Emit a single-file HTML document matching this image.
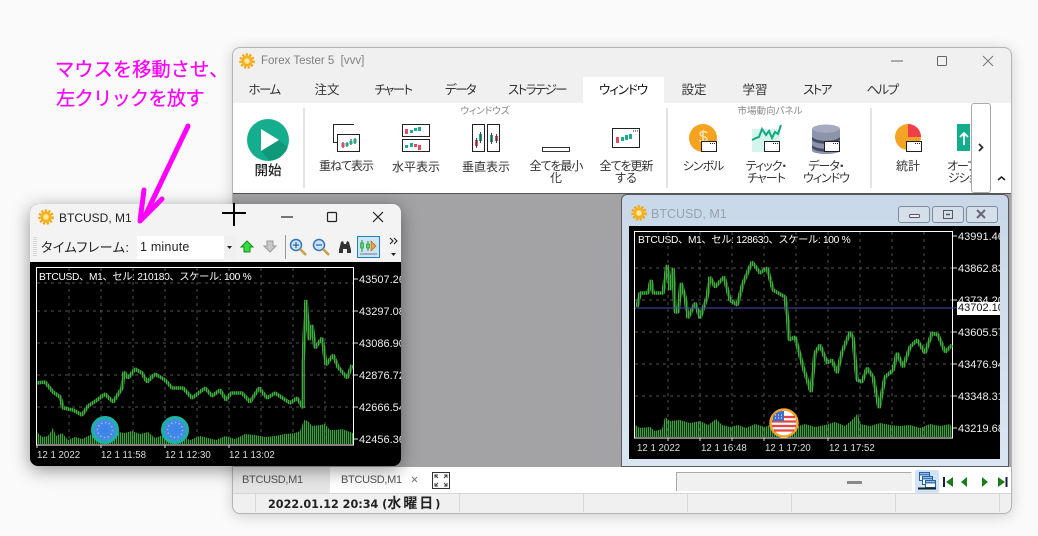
<!DOCTYPE html>
<html><head><meta charset="utf-8"><style>
html,body{margin:0;padding:0;width:1038px;height:536px;overflow:hidden;background:#fafafa}
body{position:relative;font-family:"Liberation Sans","Noto Sans CJK JP",sans-serif;color:#222}
div,span{position:absolute;box-sizing:border-box}
.t{white-space:nowrap;font-size:12px;line-height:14px;font-feature-settings:"palt";transform:translateX(-50%);color:#333}
.k{letter-spacing:-1px}
.l{white-space:nowrap;font-size:12px;line-height:14px;font-feature-settings:"palt"}
.tab{font-size:12.5px;color:#333;top:83px}
.kt{letter-spacing:-1.6px}
.ax{white-space:nowrap;font-size:11px;line-height:12px;color:#eee}
.tm{white-space:nowrap;font-size:9.7px;line-height:12px;color:#ddd}
.cap{white-space:nowrap;font-size:10.2px;line-height:14px;letter-spacing:-.3px;color:#fff}
.mg{white-space:nowrap;font-size:19.3px;line-height:24px;color:#ff00ff;-webkit-text-stroke:.25px #ff00ff}
svg{position:absolute;left:0;top:0;overflow:visible}
</style></head><body>

<!-- main window -->
<div style="left:232px;top:47px;width:780px;height:467px;background:#f0f0f0;border:1px solid #b4b4b4;border-radius:8px;box-shadow:0 2px 14px rgba(0,0,0,.18);overflow:hidden"></div>
<div style="left:233px;top:103px;width:778px;height:90px;background:#fff"></div>
<div style="left:583px;top:77px;width:81px;height:26px;background:#fff"></div>
<div style="left:233px;top:193px;width:778px;height:274px;background:#a3a2a5;border-top:1px solid #555"></div>
<div style="left:233px;top:467px;width:778px;height:26px;background:#fff"></div>
<div style="left:233px;top:467px;width:97px;height:26px;background:#e6e6e6"></div>
<div style="left:233px;top:493px;width:778px;height:20px;background:#f0f0f0;border-top:1px solid #d5d5d5;border-radius:0 0 8px 8px"></div>

<div class="l" style="left:261px;top:54px;color:#808080;font-size:11.5px;white-space:pre;font-feature-settings:normal">Forex Tester 5  [vvv]</div>
<div class="t tab kt" style="left:264px">ホーム</div>
<div class="t tab" style="left:327px">注文</div>
<div class="t tab kt" style="left:393px">チャート</div>
<div class="t tab kt" style="left:460px">データ</div>
<div class="t tab kt" style="left:537px">ストラテジー</div>
<div class="t tab k" style="left:623px;color:#111">ウィンドウ</div>
<div class="t tab" style="left:694px">設定</div>
<div class="t tab" style="left:755px">学習</div>
<div class="t tab kt" style="left:817px">ストア</div>
<div class="t tab kt" style="left:882px">ヘルプ</div>

<div class="t" style="left:485px;top:105px;font-size:9.5px;color:#888">ウィンドウズ</div>
<div class="t" style="left:770px;top:105px;font-size:9.5px;color:#888">市場動向パネル</div>

<div class="t" style="left:268px;top:164px;font-size:13.5px;font-weight:500;color:#222">開始</div>
<div class="t k" style="left:346px;top:159px">重ねて表示</div>
<div class="t" style="left:416px;top:160px">水平表示</div>
<div class="t" style="left:486px;top:160px">垂直表示</div>
<div class="t k" style="left:556px;top:159px">全てを最小</div>
<div class="t" style="left:556px;top:171px">化</div>
<div class="t k" style="left:626px;top:159px">全てを更新</div>
<div class="t" style="left:626px;top:171px">する</div>
<div class="t k" style="left:703px;top:159px">シンボル</div>
<div class="t k" style="left:766px;top:159px">ティック・</div>
<div class="t k" style="left:766px;top:171px">チャート</div>
<div class="t k" style="left:826px;top:159px">データ・</div>
<div class="t k" style="left:826px;top:171px">ウィンドウ</div>
<div class="t" style="left:908px;top:159px">統計</div>
<div class="t k" style="left:967px;top:159px">オープン</div>
<div class="t k" style="left:967px;top:171px">ジション</div>

<!-- ribbon icons -->
<svg width="1038" height="536" fill="none">
<defs>
<g id="gear"><circle r="5.6" fill="#f5b21c"/><circle r="6.6" stroke="#f0a818" stroke-width="2.4" stroke-dasharray="2.2 1.5"/><circle r="2.8" fill="#fbe7a0"/></g>
<g id="win"><rect x=".5" y=".5" width="15" height="10" fill="#fff" stroke="#222"/><path d="M9 2.5h1m1 0h1m1 0h1" stroke="#222"/></g>
<clipPath id="pc"><circle cx="268" cy="140" r="21"/></clipPath>
</defs>
<use href="#gear" x="247" y="61"/>
<path d="M891 61h12" stroke="#666"/>
<rect x="937.500" y="56.500" width="9" height="9" rx="1" stroke="#666"/>
<path d="M983 56l10 10M993 56l-10 10" stroke="#777"/>
<path d="M304 108v80M667 108v80M871 108v80" stroke="#d9d9d9" stroke-width="1.500"/>
<circle cx="268" cy="140" r="21" fill="#14ae8e"/>
<path d="M279 140l14 12-20 12-12-13z" fill="#0e9377" opacity=".8" clip-path="url(#pc)"/>
<path d="M261 129l18 11-18 11z" fill="#fff"/>

<!-- cascade -->
<path d="M354 124.500h-20.500v18h4" stroke="#222"/><path d="M349 124.500h4" stroke="#222"/>
<rect x="337.500" y="134.500" width="22" height="17" fill="#fff" stroke="#222"/>
<path d="M343 142v6M347 142v5M351 139v6M355 138v6" stroke="#333"/>
<rect x="341.500" y="143" width="3" height="4" fill="#e04b5f"/><rect x="345.500" y="143" width="3" height="3" fill="#1eab8c"/><rect x="349.500" y="141" width="3" height="3" fill="#1eab8c"/><rect x="353.500" y="139" width="3" height="4" fill="#1eab8c"/>
<!-- horizontal -->
<rect x="402.500" y="124.500" width="27" height="12" fill="#fff" stroke="#222"/>
<rect x="402.500" y="139.500" width="27" height="12" fill="#fff" stroke="#222"/>
<rect x="405" y="129" width="3" height="5" fill="#e04b5f"/><rect x="410" y="130" width="3" height="3" fill="#1eab8c"/><rect x="414" y="128" width="3" height="3" fill="#1eab8c"/><rect x="418" y="127" width="3" height="4" fill="#1eab8c"/>
<rect x="405" y="145" width="3" height="3" fill="#1eab8c"/><rect x="410" y="143" width="3" height="4" fill="#1eab8c"/><rect x="414" y="144" width="3" height="3" fill="#e04b5f"/><rect x="418" y="145" width="3" height="5" fill="#e04b5f"/>
<!-- vertical -->
<rect x="472.500" y="124.500" width="12" height="27" fill="#fff" stroke="#222"/>
<rect x="487.500" y="124.500" width="12" height="27" fill="#fff" stroke="#222"/>
<rect x="475" y="140" width="3" height="6" fill="#e04b5f"/><rect x="479" y="134" width="3" height="7" fill="#1eab8c"/><rect x="490" y="135" width="3" height="7" fill="#1eab8c"/><rect x="495" y="136" width="3" height="5" fill="#e04b5f"/>
<path d="M476.500 138v10M480.500 132v11M491.500 133v11M496.500 134v9" stroke="#444"/>
<!-- minimize -->
<rect x="542.500" y="147.500" width="27" height="4" fill="#fff" stroke="#333"/>
<!-- refresh -->
<rect x="612.500" y="128.500" width="27" height="19" fill="#fff" stroke="#222"/>
<path d="M633 131h1m1 0h1m1 0h1" stroke="#222"/>
<rect x="616" y="137" width="3" height="6" fill="#e04b5f"/><rect x="621" y="137" width="3" height="4" fill="#1eab8c"/><rect x="625" y="135" width="3" height="5" fill="#1eab8c"/><rect x="629" y="134" width="3" height="5" fill="#1eab8c"/>
<!-- symbol -->
<circle cx="703" cy="138" r="14" fill="#f5a21e"/>
<path d="M707 133c-1-2-7-2-7 1s7 2 7 5-6 3-8 1M703 130v14" stroke="#fbe3b4" stroke-width="1.500"/>
<g transform="translate(701 141)"><use href="#win"/></g>
<!-- tick chart -->
<rect x="752" y="129" width="28" height="23" fill="#d2f5ec"/>
<path d="M752 140l4-2 3-1 3-8 4 6 3-4 3 7 3-6 3 2 3-9" stroke="#16a87e" stroke-width="2"/>
<g transform="translate(764 141)"><use href="#win"/></g>
<!-- data -->
<ellipse cx="826" cy="129" rx="14" ry="4.500" fill="#a4abc0"/>
<path d="M812 129v22c3 4 25 4 28 0v-22c-4 5-24 5-28 0z" fill="#8d93ab"/>
<path d="M812 137c4 5 24 5 28 0v3c-4 5-24 5-28 0zM812 145c4 5 24 5 28 0v3c-4 5-24 5-28 0z" fill="#454d63"/>
<g transform="translate(824 141)"><use href="#win"/></g>
<!-- stats -->
<circle cx="908" cy="137" r="13" fill="#f4a425"/>
<path d="M908 124a13 13 0 0 1 13 13h-13z" fill="#ef3f4a"/>
<g transform="translate(906 141)"><use href="#win"/></g>
<!-- open pos -->
<path d="M957 124h13v27h-13z" fill="#12ad8c"/>
<path d="M964 145v-11M960 137l4-4 4 4" stroke="#fff" stroke-width="1.800"/>
</svg>

<div style="left:971px;top:103px;width:20px;height:90px;background:#fff;border:1px solid #aaa;border-radius:3px"></div>
<svg width="1038" height="536" fill="none">
<path d="M979 144l3.500 3.500-3.500 3.500" stroke="#222" stroke-width="1.600"/>
<path d="M998 180l3.500-3 3.500 3" stroke="#222" stroke-width="1.600"/>
</svg>

<!-- right MDI window -->
<div style="left:621px;top:194px;width:388px;height:273px;background:linear-gradient(#c9d8e8,#d9e6f2);border:1px solid #5a5a5e;border-radius:6px 6px 0 0"></div>
<div class="l" style="left:651px;top:207px;font-size:12.5px;color:#98a2ad;font-feature-settings:normal">BTCUSD, M1</div>
<div style="left:898px;top:206px;width:32px;height:17px;background:#d5dfea;border:1px solid #7d8a9c;border-radius:3px"></div>
<div style="left:932px;top:206px;width:32px;height:17px;background:#d5dfea;border:1px solid #7d8a9c;border-radius:3px"></div>
<div style="left:966px;top:206px;width:32px;height:17px;background:#d5dfea;border:1px solid #7d8a9c;border-radius:3px"></div>
<div style="left:629px;top:226px;width:371px;height:233px;background:#000;overflow:hidden">
<div class="cap" style="left:9px;top:8px">BTCUSD、M1、セル: 128630、スケール: 100 %</div>
<div class="ax" style="left:329px;top:5px">43991.46</div>
<div class="ax" style="left:329px;top:37px">43862.83</div>
<div class="ax" style="left:329px;top:69px">43734.20</div>
<div class="ax" style="left:329px;top:101px">43605.57</div>
<div class="ax" style="left:329px;top:133px">43476.94</div>
<div class="ax" style="left:329px;top:165px">43348.31</div>
<div class="ax" style="left:329px;top:197px">43219.68</div>
<div class="tm" style="left:8px;top:217px">12 1 2022</div>
<div class="tm" style="left:72px;top:217px">12 1 16:48</div>
<div class="tm" style="left:136px;top:217px">12 1 17:20</div>
<div class="tm" style="left:200px;top:217px">12 1 17:52</div>
<div class="ax" style="left:328px;top:76px;width:43px;height:13px;background:#fff;color:#111;padding-left:1px;line-height:13px">43702.10</div>
</div>

<svg width="1038" height="536" fill="none">
<defs>
<pattern id="st" width="2" height="8" patternUnits="userSpaceOnUse"><rect width="1.500" height="8" fill="#3fb040"/></pattern>
<pattern id="sv" width="2" height="8" patternUnits="userSpaceOnUse"><rect width="1.300" height="8" fill="#3f9f42"/></pattern>
<radialGradient id="eu"><stop offset="0" stop-color="#3b82ee"/><stop offset="1" stop-color="#4a8de0"/></radialGradient>
</defs>
<use href="#gear" x="639" y="213"/>
<rect x="909.500" y="214.500" width="10" height="3" rx="1" stroke="#556" fill="#eef"/>
<rect x="943.500" y="210.500" width="9" height="8" stroke="#556"/><path d="M946 214.500h4" stroke="#556" stroke-width="1.500"/>
<path d="M977 210l8 8M985 210l-8 8" stroke="#667" stroke-width="2"/>
<!-- right grid -->
<path d="M635 268h318M635 300h318M635 332h318M635 364h318M635 396h318M668 232v205M700 232v205M732 232v205M764 232v205M796 232v205M828 232v205M860 232v205M892 232v205M924 232v205" stroke="#50505a" stroke-dasharray="3 4"/>
<rect x="634.500" y="231.500" width="318" height="206.500" stroke="#fff"/>
<path d="M953 236h4M953 268h4M953 300h4M953 332h4M953 364h4M953 396h4M953 428h4M668 438v3M732 438v3M764 438v3M828 438v3M700 438v3" stroke="#ddd"/>
<polygon fill="url(#sv)" points="635,437 635,425 640,428 650,427 655,431 662,429 665,417 670,421 680,420 690,423 700,421 708,425 716,419 722,425 730,427 738,425 746,428 755,424 765,427 775,423 785,424 795,427 805,424 815,427 825,425 835,422 845,426 852,420 858,413 860,424 870,426 880,423 890,425 900,426 910,425 920,428 930,424 940,426 950,424 952,428 952,437"/>
<polyline stroke="url(#st)" stroke-width="3.600" stroke-linejoin="bevel" points="637,307 640,293 648,293 651,280 653,293 663,293 667,265 670,290 673,268 675,312 678,312 681,283 685,297 688,318 695,303 700,318 707,297 710,277 715,287 724,277 730,300 737,305 743,283 752,262 760,273 767,268 773,290 785,297 788,323 789,340 795,337 803,367 811,392 815,353 820,345 827,363 832,360 837,373 842,352 850,332 853,338 857,380 862,382 867,368 873,377 879,408 885,377 893,370 897,353 903,367 910,347 917,340 925,353 932,333 938,335 945,352 952,345"/>
<path d="M635 308h322" stroke="#4a4ab8"/>
<circle cx="784" cy="423" r="13.500" fill="#fff" stroke="#f2a42a" stroke-width="2.500"/>
<path d="M773 417h22M772 421.500h24M772 426h24M774 430.500h20" stroke="#e8443f" stroke-width="2.200"/>
<path d="M774 415a12 12 0 0 1 10-4v10h-12z" fill="#3f6fc8"/>
<path d="M775 415h1m2 0h1m2 0h1M775 418h1m2 0h1m2 0h1" stroke="#fff"/>

<!-- bottom right bar -->
<path d="M676.500 491v-18.500h235" stroke="#aaa" fill="none"/>
<rect x="677" y="473" width="235" height="18" fill="#f0f0f0"/>
<rect x="847" y="481" width="15" height="3" fill="#8a8a8a"/>
<rect x="915" y="470" width="24" height="23" rx="2" fill="#cfe5f7"/>
<rect x="919.500" y="472.500" width="10" height="8" fill="#fff" stroke="#2a5f9e"/><path d="M920 474.500h9" stroke="#3a7ac0" stroke-width="2"/>
<rect x="922.500" y="476.500" width="10" height="8" fill="#fff" stroke="#2a5f9e"/><path d="M923 478.500h9" stroke="#3a7ac0" stroke-width="2"/>
<rect x="925.500" y="480.500" width="10" height="7" fill="#fff" stroke="#2a5f9e"/><path d="M926 482.500h9" stroke="#3a7ac0" stroke-width="2"/>
<path d="M918 488.500h18" stroke="#122" stroke-width="2"/>
<path d="M944 477v10" stroke="#123" stroke-width="2"/><path d="M953 477v10l-7-5z" fill="#1c7c1c"/>
<path d="M967 477v10l-6-5z" fill="#1c7c1c"/>
<path d="M982 477v10l6-5z" fill="#1c7c1c"/>
<path d="M998 477v10l7-5z" fill="#1c7c1c"/><path d="M1006.500 477v10" stroke="#123" stroke-width="2"/>
<!-- statusbar separators -->
<path d="M255.500 494v18M459.500 494v18M583.500 494v18M687.500 494v18M791.500 494v18M895.500 494v18M999.500 494v18" stroke="#d8d8d8"/>
<!-- fullscreen icon -->
<rect x="432.500" y="472.500" width="17" height="16" fill="#fff" stroke="#333"/>
<path d="M435 478v-3h3M447 478v-3h-3M435 483v3h3M447 483v3h-3M435 475l3 3M447 475l-3 3M435 486l3-3M447 486l-3-3" stroke="#333" stroke-width=".9"/>
<path d="M412 477l5 5M417 477l-5 5" stroke="#777"/>
</svg>
<div class="l" style="left:242px;top:473px;font-size:11px;letter-spacing:-.3px;color:#555;font-feature-settings:normal">BTCUSD,M1</div>
<div class="l" style="left:341px;top:473px;font-size:11px;letter-spacing:-.3px;color:#555;font-feature-settings:normal">BTCUSD,M1</div>
<div class="l" style="left:268px;top:497px;font-family:'DejaVu Sans','Noto Sans CJK JP',sans-serif;font-weight:700;font-size:11.2px;color:#222;font-feature-settings:normal">2022.01.12 20:34 (<span style="position:static;font-size:14px;letter-spacing:2px">水曜日</span>)</div>

<!-- floating left window -->
<div style="left:30px;top:204px;width:371px;height:262px;background:#000;border-radius:8px;box-shadow:0 4px 18px rgba(0,0,0,.42);overflow:hidden">
<div style="left:0;top:0;width:371px;height:58px;background:#f3f3f3"></div>
<div class="l" style="left:29px;top:7px;color:#222;font-feature-settings:normal">BTCUSD, M1</div>
<div class="l" style="left:11px;top:37px;font-size:13px;color:#222;letter-spacing:.5px">タイムフレーム:</div>
<div style="left:107px;top:32px;width:87px;height:23px;background:#fff"></div>
<div style="left:194px;top:32px;width:12px;height:23px;background:#f0f0f0"></div>
<div class="l" style="left:110px;top:36px;font-size:12.500px;color:#222;letter-spacing:.2px;font-feature-settings:normal">1 minute</div>
<div class="cap" style="left:9px;top:67px">BTCUSD、M1、セル: 210180、スケール: 100 %</div>
<div class="ax" style="left:329px;top:70px">43507.26</div>
<div class="ax" style="left:329px;top:102px">43297.08</div>
<div class="ax" style="left:329px;top:134px">43086.90</div>
<div class="ax" style="left:329px;top:166px">42876.72</div>
<div class="ax" style="left:329px;top:198px">42666.54</div>
<div class="ax" style="left:329px;top:230px">42456.36</div>
<div class="tm" style="left:7px;top:246px">12 1 2022</div>
<div class="tm" style="left:71px;top:246px">12 1 11:58</div>
<div class="tm" style="left:135px;top:246px">12 1 12:30</div>
<div class="tm" style="left:199px;top:246px">12 1 13:02</div>
</div>

<svg width="1038" height="536" fill="none">
<use href="#gear" x="46" y="217"/>
<path d="M281 217h12" stroke="#222" stroke-width="1.200"/>
<rect x="327.500" y="212.500" width="9" height="9" rx="1" stroke="#222" stroke-width="1.200"/>
<path d="M373 212l10 10M383 212l-10 10" stroke="#222" stroke-width="1.200"/>
<path d="M222 213h24M234 203v23" stroke="#000" stroke-width="2"/>
<path d="M34 237v20M36 237v20" stroke="#bbb" stroke-dasharray="1 1"/>
<path d="M227 246h5l-2.500 3z" fill="#222"/>
<path d="M247 241l6 6h-3v5h-6v-5h-3z" fill="#2fe03a" stroke="#1a8a20"/>
<path d="M270 252l6-6h-3v-5h-6v5h-3z" fill="#c8c8c8" stroke="#999"/>
<path d="M285.500 235v24" stroke="#999"/>
<circle cx="296" cy="245" r="5.500" fill="#cfe3f7" stroke="#3474b5" stroke-width="1.500"/><path d="M293 245h6M296 242v6" stroke="#2b6cb0" stroke-width="1.300"/><path d="M300 249l6 6" stroke="#c9a040" stroke-width="2.500"/>
<circle cx="319" cy="245" r="5.500" fill="#cfe3f7" stroke="#3474b5" stroke-width="1.500"/><path d="M316 245h6" stroke="#2b6cb0" stroke-width="1.300"/><path d="M323 249l6 6" stroke="#c9a040" stroke-width="2.500"/>
<path d="M339 250l2-8 2-1 1 3h2l1-3 2 1 2 8v3h-4v-4h-4v4h-4z" fill="#333"/>
<rect x="357.500" y="236.500" width="22" height="21" fill="#cce4f7" stroke="#2080c0"/>
<path d="M362 240v12M368 241v10" stroke="#1b8f2a"/><rect x="360.500" y="243" width="3" height="5" fill="#52d95a" stroke="#1b8f2a" stroke-width=".6"/><rect x="366.500" y="244" width="3" height="4" fill="#52d95a" stroke="#1b8f2a" stroke-width=".6"/>
<path d="M371 241l5 5-5 5z" fill="#f2a040" stroke="#b06010" stroke-width=".6"/>
<path d="M360 254h17" stroke="#777"/>
<path d="M390 238l3 3-3 3M394 238l3 3-3 3" stroke="#222" stroke-width="1.100"/>
<path d="M391 253h5l-2.500 3z" fill="#222"/>
<!-- left grid -->
<path d="M37 283h316M37 311h316M37 343h316M37 375h316M37 407h316M69 268v176M101 268v176M133 268v176M165 268v176M197 268v176M229 268v176M261 268v176M293 268v176M325 268v176" stroke="#50505a" stroke-dasharray="3 4"/>
<rect x="36.500" y="267.500" width="317" height="177.500" stroke="#fff"/>
<path d="M354 279h4M354 311h4M354 343h4M354 375h4M354 407h4M354 439h4M37 445v3M101 445v3M165 445v3M229 445v3" stroke="#ddd"/>
<polygon fill="url(#sv)" points="37,444 37,432 42,437 48,436 53,428 56,436 62,433 68,440 75,437 82,439 90,435 100,432 110,436 118,432 125,433 132,431 140,434 148,432 155,438 163,435 172,437 182,436 190,440 200,436 208,438 216,440 225,436 235,439 245,434 255,435 265,437 275,436 285,434 295,433 300,431 304,420 308,421 312,426 320,425 325,424 330,430 336,430 342,429 350,432 353,433 353,444"/>
<polyline stroke="url(#st)" stroke-width="3.600" stroke-linejoin="bevel" points="37,383 45,382 53,392 60,397 63,408 73,410 82,415 88,406 97,400 105,394 113,402 122,388 124,372 128,378 135,369 142,373 147,382 155,374 165,380 172,388 183,388 192,398 205,388 212,396 220,390 226,400 231,393 242,393 250,402 259,388 267,398 275,393 290,403 297,398 303,408 303,362 306,300 309,340 312,325 315,348 322,338 326,365 333,355 338,367 347,378 352,365"/>
<circle cx="105" cy="430" r="12.500" fill="url(#eu)" stroke="#19b5a0" stroke-width="3"/>
<circle cx="105" cy="430" r="7.500" stroke="#a8c8f4" stroke-width="1.300" stroke-dasharray="1.200 2.700"/>
<circle cx="175" cy="430" r="12.500" fill="url(#eu)" stroke="#19b5a0" stroke-width="3"/>
<circle cx="175" cy="430" r="7.500" stroke="#a8c8f4" stroke-width="1.300" stroke-dasharray="1.200 2.700"/>
<!-- magenta arrow -->
<path d="M188 126L145 216" stroke="#ff00ff" stroke-width="5" stroke-linecap="round"/>
<path d="M144 190L140 221 162 199" stroke="#ff00ff" stroke-width="5" stroke-linecap="round" stroke-linejoin="round"/>
</svg>

<div class="mg" style="left:55px;top:59px">マウスを移動させ、</div>
<div class="mg" style="left:56px;top:88px;letter-spacing:-.8px">左クリックを放す</div>
</body></html>
